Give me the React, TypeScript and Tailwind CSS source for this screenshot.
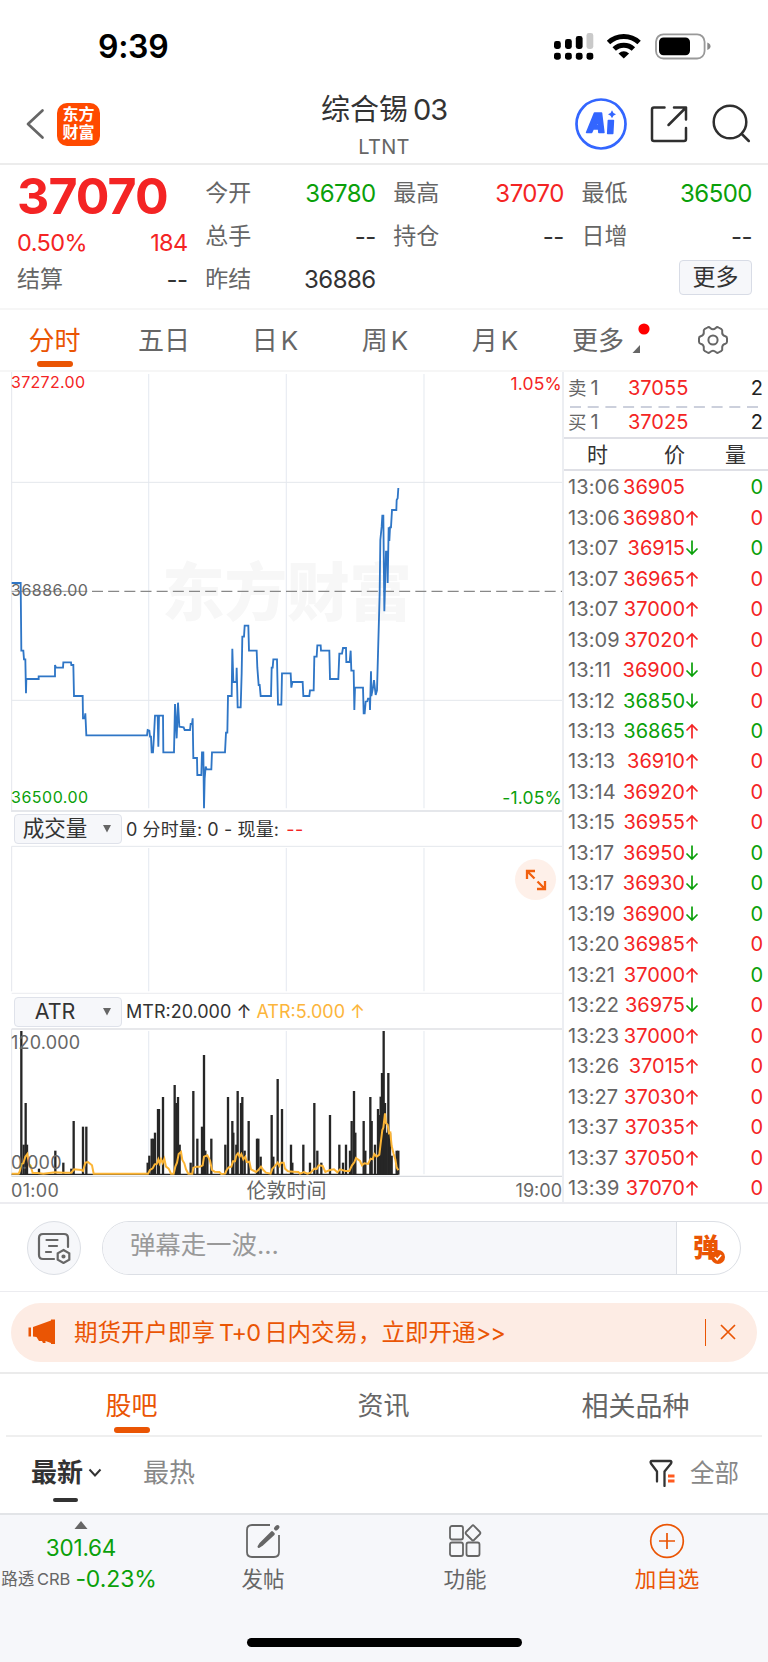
import { clsx } from "clsx";

const RED = "text-[#f42424]";
const GREEN = "text-[#0aa00a]";

type Trade = [time: string, price: string, dir: "up" | "down" | "", priceUp: boolean, volUp: boolean];

const TRADES: Trade[] = [
  ["13:06", "36905", "", true, false],
  ["13:06", "36980", "up", true, true],
  ["13:07", "36915", "down", true, false],
  ["13:07", "36965", "up", true, true],
  ["13:07", "37000", "up", true, true],
  ["13:09", "37020", "up", true, true],
  ["13:11", "36900", "down", true, true],
  ["13:12", "36850", "down", false, true],
  ["13:13", "36865", "up", false, false],
  ["13:13", "36910", "up", true, true],
  ["13:14", "36920", "up", true, true],
  ["13:15", "36955", "up", true, true],
  ["13:17", "36950", "down", true, false],
  ["13:17", "36930", "down", true, false],
  ["13:19", "36900", "down", true, false],
  ["13:20", "36985", "up", true, true],
  ["13:21", "37000", "up", true, false],
  ["13:22", "36975", "down", true, true],
  ["13:23", "37000", "up", true, true],
  ["13:26", "37015", "up", true, true],
  ["13:27", "37030", "up", true, true],
  ["13:37", "37035", "up", true, true],
  ["13:37", "37050", "up", true, true],
  ["13:39", "37070", "up", true, true],
];

// chart coordinates are in thirds of a pixel
const PRICE_LINE =
  "35,69 62,69 64,272 70,272 72,298 76,298 78,400 79,357 116,357 116,349 165,349 165,315 168,323 189,323 190,307 213,307 214,315 220,315 222,408 248,408 249,475 254,475 256,460 259,526 441,526 443,510 448,512 450,530 453,530 455,577 459,577 462,526 465,467 473,467 475,560 477,467 489,467 490,577 522,577 525,432 530,535 534,428 538,500 551,502 554,510 570,510 572,492 576,492 578,475 580,594 591,594 592,645 604,645 606,577 610,577 612,745 614,655 617,620 620,628 634,628 636,577 675,577 678,518 682,518 684,408 695,408 697,266 700,366 709,366 710,323 713,442 722,442 725,340 727,230 732,230 734,197 745,197 747,272 770,272 772,323 776,375 779,375 782,408 813,408 815,323 818,323 820,298 831,298 834,434 844,434 846,340 872,340 874,383 877,366 908,366 910,408 928,408 930,391 941,391 943,290 950,290 952,256 962,256 963,272 988,272 990,357 1015,357 1018,281 1026,281 1029,264 1038,264 1039,306 1049,306 1052,272 1054,332 1061,332 1063,450 1065,383 1089,383 1091,460 1094,460 1097,425 1102,424 1104,416 1109,416 1110,450 1113,334 1114,408 1119,383 1122,360 1127,405 1131,391 1139,100 1141,-60 1145,-100 1147,-133 1150,-133 1153,154 1158,-25 1162,-25 1163,69 1166,-98 1168,-57 1170,-98 1173,-98 1176,-150 1189,-150 1190,-180 1193,-185 1195,-216";

const MTR_BARS: [number, number][] = [
  [64, 93], [71, 434], [77, 309], [81, 434], [117, 506], [166, 452], [190, 488], [214, 506], [221, 363], [249, 380], [259, 380],
  [443, 488], [448, 467], [455, 416], [460, 416], [465, 398], [474, 327], [477, 327], [489, 291], [524, 255], [529, 309], [534, 291], [539, 434],
  [572, 488], [580, 273], [592, 416], [606, 380], [612, 165], [616, 452], [622, 470], [634, 416], [676, 434], [684, 291], [697, 363], [700, 398], [709, 434],
  [713, 273], [723, 309], [727, 291], [734, 452], [746, 363], [771, 416], [775, 416], [782, 470], [815, 345], [820, 470], [833, 237], [846, 327],
  [873, 434], [877, 488], [910, 434], [930, 488], [943, 309], [952, 452], [964, 488], [990, 345], [1018, 434], [1029, 488], [1038, 434],
  [1050, 452], [1055, 363], [1062, 273], [1066, 398], [1091, 363], [1096, 452], [1111, 291], [1115, 363], [1125, 434], [1134, 327], [1138, 345],
  [1142, 290], [1146, 219], [1151, 93], [1155, 309], [1160, 398], [1165, 219], [1170, 398], [1175, 467], [1190, 452], [1195, 452],
];

const ATR_LINE =
  "35,521 56,521 60,512 64,492 70,490 76,470 82,462 87,492 92,497 98,519 112,519 130,521 165,517 190,518 214,518 222,508 244,510 249,513 256,488 264,486 276,496 281,521 444,521 450,510 458,505 464,493 470,492 475,478 479,490 483,478 488,489 493,476 498,500 506,506 513,521 521,521 526,500 531,488 536,462 543,456 547,480 553,490 558,508 565,521 577,521 580,503 590,500 600,500 608,496 612,470 622,466 630,482 636,510 644,515 658,516 664,522 675,521 680,510 686,502 694,500 699,484 705,484 709,466 714,460 719,470 724,462 730,478 736,470 740,486 748,485 753,508 768,516 775,510 783,500 790,510 798,518 812,521 817,506 823,500 833,488 838,498 843,488 851,488 855,506 864,514 880,515 895,516 900,521 912,516 922,521 932,518 943,506 950,507 956,496 968,498 976,516 990,510 1002,508 1012,517 1020,508 1036,513 1048,513 1056,496 1063,487 1068,474 1080,483 1086,496 1093,490 1104,492 1112,476 1118,478 1123,462 1130,470 1138,464 1142,430 1147,390 1150,383 1155,340 1158,370 1163,374 1167,400 1171,398 1175,438 1181,462 1186,478 1190,502 1195,511";

function Grid({ top, bottom }: { top: number; bottom: number }) {
  return (
    <g stroke="#e8ecf2" strokeWidth="3.5">
      {[446, 859, 1272].map((x) => (
        <line key={x} x1={x} x2={x} y1={top} y2={bottom} />
      ))}
    </g>
  );
}

function StatusBar() {
  return (
    <div className="flex h-[90px] items-center justify-between pt-[2px] pr-[56px] pl-[98px]">
      <span className="pt-px text-[32px] leading-none font-semibold tracking-[-0.3px] text-black">9:39</span>
      <svg width="158" height="30" viewBox="553 30 158 30" className="block">
        {[[553, 40], [564, 38], [574.8, 35]].map(([x, y]) => (
          <rect key={x} x={x} y={y} width="6.8" height={48 - y} rx="2.4" />
        ))}
        <rect x="585.5" y="32" width="6.8" height="16" rx="2.4" fill="#c9c9c9" />
        {[553, 564, 574.8, 585.5].map((x) => (
          <rect key={x} x={x} y="51.7" width="6.8" height="7" rx="2.4" />
        ))}
        <g fill="none" stroke="#000" strokeWidth="5">
          <path d="M607.5 41.5a22.5 22.5 0 0 1 30.6 0" />
          <path d="M613.2 48a14 14 0 0 1 19.2 0" />
        </g>
        <path d="M617.5 52.6q5.3-4.6 10.6 0L622.8 57.6z" />
        <rect x="655" y="33.3" width="48.6" height="24.2" rx="7.5" fill="none" stroke="#999" strokeWidth="1.8" />
        <rect x="658" y="36.5" width="31" height="17.8" rx="4.5" />
        <path d="M706.3 41.5q3.2 1.2 3.2 3.8t-3.2 3.8z" fill="#888" />
      </svg>
    </div>
  );
}

function Header() {
  return (
    <div className="grid h-[75px] grid-cols-3 border-b-2 border-[#ececec] pb-0.5">
      <div className="flex items-center gap-3 pb-[7px] pl-[25px]">
        <svg width="20" height="32" viewBox="0 0 20 32" fill="none" stroke="#666" strokeWidth="2.7" strokeLinecap="round" strokeLinejoin="round">
          <path d="M17.5 2.5 3 16l14.5 13.5" />
        </svg>
        <div className="flex h-[43px] w-[43px] items-center justify-center rounded-[10px] bg-[#ff4a00] pb-0.5 text-center text-[16px] leading-[18px] font-semibold text-white">
          东方
          <br />
          财富
        </div>
      </div>
      <div className="flex flex-col items-center pt-px">
        <div className="flex h-[37px] items-center gap-[5px] text-[29px] leading-none text-[#333]">
          <span>综合锡</span>
          <span className="tracking-[-1.2px]">03</span>
        </div>
        <div className="flex h-[37px] items-center text-[20px] leading-none tracking-[0.3px] text-[#666]">LTNT</div>
      </div>
      <div className="flex items-start justify-end pt-[8px] pr-[17px]">
        <svg width="178" height="52" viewBox="573 98 178 52" fill="none">
          <circle cx="601" cy="124" r="24.5" stroke="#3366ff" strokeWidth="2.7" />
          <g fill="#3366ff" stroke="#3366ff" strokeWidth="1.6" strokeLinejoin="round">
            <path fillRule="evenodd" d="M594.5 113h7l2.4 19.5h-5l-.3-3.6h-5.4l-1.6 3.6h-5zm1.2 12.2h2.7l-.4-5.6z" />
            <path d="M608.4 120.5h5l-.7 13h-5z" />
          </g>
          <path d="M612 110.2q.8 3.2 4 4-3.2.8-4 4-.8-3.2-4-4 3.2-.8 4-4z" fill="#3366ff" />
          <g stroke="#2f2f2f" strokeWidth="2.5" strokeLinecap="round" strokeLinejoin="round">
            <path d="M664.5 107.5H654q-2 0-2 2V139q0 2 2 2h30q2 0 2-2v-11" />
            <path d="M674 107.5h12v12M686 107.5 668.5 125" />
            <circle cx="730" cy="122" r="16.3" />
            <path d="M741.8 134l7 7" />
          </g>
        </svg>
      </div>
    </div>
  );
}

function Stat({ label, value, color = "text-[#333]" }: { label: string; value: string; color?: string }) {
  return (
    <div className="flex h-[43px] items-center justify-between">
      <span className="text-[23px] text-[#666]">{label}</span>
      <span className={clsx("text-[24px] tracking-[-0.5px]", color)}>{value}</span>
    </div>
  );
}

function Quote() {
  return (
    <div className="flex h-[145px] gap-[17.5px] border-b-2 border-[#f6f6f6] pr-4 pl-[17px] leading-none">
      <div className="w-[171px]">
        <div className={clsx("flex h-[61px] items-center text-[50px] font-bold tracking-[-0.9px] whitespace-nowrap", RED)}>37070</div>
        <div className={clsx("flex h-[35px] items-center justify-between pb-0.5 text-[23.5px] tracking-[-0.6px]", RED)}>
          <span>0.50%</span>
          <span>184</span>
        </div>
        <div className="-mt-[3px]">
          <Stat label="结算" value="--" />
        </div>
      </div>
      <div className="w-[171px] pt-[7px]">
        <Stat label="今开" value="36780" color={GREEN} />
        <Stat label="总手" value="--" />
        <Stat label="昨结" value="36886" />
      </div>
      <div className="w-[171px] pt-[7px]">
        <Stat label="最高" value="37070" color={RED} />
        <Stat label="持仓" value="--" />
      </div>
      <div className="w-[171px] pt-[7px]">
        <Stat label="最低" value="36500" color={GREEN} />
        <Stat label="日增" value="--" />
        <div className="flex h-[43px] items-start justify-end pt-[2px]">
          <button className="flex h-[35px] w-[73px] items-center justify-center rounded border border-[#d8dce6] bg-[#f6f7fa] text-[23px] text-[#333]">更多</button>
        </div>
      </div>
    </div>
  );
}

function KTab({ unit }: { unit: string }) {
  return (
    <div className="flex w-[110px] justify-center gap-[3px] pt-[18px] pl-[2px]">
      <span>{unit}</span>
      <span>K</span>
    </div>
  );
}

function PeriodTabs() {
  return (
    <div className="flex h-[62px] border-b-2 border-[#f6f6f6] text-[26px] leading-none text-[#666]">
      <div className="flex w-[109px] flex-col items-center pt-[18px] text-[#ea5504]">
        分时
        <span className="mt-[7px] h-[6px] w-9 rounded-full bg-[#ea5504]" />
      </div>
      <div className="w-[110px] pt-[18px] text-center">五日</div>
      <KTab unit="日" />
      <KTab unit="周" />
      <KTab unit="月" />
      <div className="flex w-[117px] pt-[18px] pl-[23px]">
        更多
        <svg width="20" height="34" viewBox="0 0 20 34" className="-mt-[6px] ml-[7px]">
          <circle cx="13" cy="7" r="5.6" fill="#ff0000" />
          <path d="M9 23v8H1.5z" fill="#666" />
        </svg>
      </div>
      <div className="flex w-[94px] justify-center pt-[15px]">
        <svg width="30" height="30" viewBox="-15 -15 30 30" fill="none" stroke="#666" strokeWidth="2" strokeLinejoin="round">
          <path d="M-5.5-12.5Q-4-13.5-2.8-12 0-9.5 2.8-12 4-13.5 5.5-12.5L8.5-10.8Q9.6-10 9.2-8.5 8.8-4.6 12.4-3.8 14-3.3 14-1.8V1.8Q14 3.3 12.4 3.8 8.8 4.6 9.2 8.5 9.6 10 8.5 10.8L5.5 12.5Q4 13.5 2.8 12 0 9.5-2.8 12-4 13.5-5.5 12.5L-8.5 10.8Q-9.6 10-9.2 8.5-8.8 4.6-12.4 3.8-14 3.3-14 1.8V-1.8Q-14-3.3-12.4-3.8-8.8-4.6-9.2-8.5-9.6-10-8.5-10.8z" />
          <circle r="4.6" />
        </svg>
      </div>
    </div>
  );
}

function IndicatorSelect({ name }: { name: string }) {
  return (
    <div className="ml-[14px] flex h-[30px] w-[108px] items-center rounded border border-[#dfe2ea] bg-[#f6f7fa] text-[21.5px] text-[#333]">
      <span className="w-[80px] text-center">{name}</span>
      <svg width="10" height="8" viewBox="0 0 10 8" className="ml-[7px]">
        <path d="M1 0h8L5 7.5z" fill="#666" />
      </svg>
    </div>
  );
}

function Charts() {
  return (
    <div className="w-[562px] leading-none">
      <div className="relative h-[440px]">
        <svg width="562" height="440" viewBox="0 -564 1686 1320" className="block">
          <Grid top={-558} bottom={745} />
          <path d="M35-564V756M35-233H1686M35 421H1686" stroke="#e4e7ec" strokeWidth="3" fill="none" />
          <path d="M35 753H1686" stroke="#dcdfe4" strokeWidth="4" />
          <text x="486" y="166" fontSize="188" fontWeight="900" fill="#f7f7f7" fontFamily="Noto Sans CJK SC" textLength="750">东方财富</text>
          <path d="M35 94H262" stroke="#999" strokeWidth="3" />
          <path d="M276 94H1686" stroke="#888" strokeWidth="3.5" strokeDasharray="33 15.5" />
          <polyline points={PRICE_LINE} fill="none" stroke="#2f76c6" strokeWidth="5.5" />
        </svg>
        <span className={clsx("absolute top-[2px] left-[11px] text-[16px] tracking-[0.3px]", RED)}>37272.00</span>
        <span className={clsx("absolute top-[3px] right-0 text-[17.5px] tracking-[0.2px]", RED)}>1.05%</span>
        <span className="absolute top-[210px] left-[11px] text-[16px] tracking-[0.5px] text-[#666]">36886.00</span>
        <span className={clsx("absolute top-[417px] left-[11px] text-[16px] tracking-[0.5px]", GREEN)}>36500.00</span>
        <span className={clsx("absolute top-[417px] right-0 text-[17.5px] tracking-[0.2px]", GREEN)}>-1.05%</span>
      </div>
      <div className="flex h-[33px] items-center gap-1 pt-px">
        <IndicatorSelect name="成交量" />
        <span className="pt-px text-[18px] tracking-[0.1px] whitespace-pre text-[#333]">
          0 分时量: 0 - 现量: <span className="ml-[2px] tracking-[0.5px] text-[#f42424]">--</span>
        </span>
      </div>
      <div className="relative h-[149px]">
        <svg width="562" height="149" viewBox="0 135 1686 447" className="block">
          <Grid top={144} bottom={574} />
          <path d="M35 139H1686M35 139V574" stroke="#e4e7ec" strokeWidth="3" fill="none" />
          <path d="M35 581H1686" stroke="#eeeff2" strokeWidth="5" />
        </svg>
        <div className="absolute top-[14px] right-[6px] flex h-[41px] w-[41px] items-center justify-center rounded-full bg-[#fef0e9]">
          <svg width="22" height="22" viewBox="0 0 22 22" fill="none" stroke="#f2600f" strokeWidth="2.3">
            <path d="M10 2H2v8M2 2l7.5 7.5M20 12v8h-8M20 20l-7.5-7.5" />
          </svg>
        </div>
      </div>
      <div className="flex h-[34px] items-center gap-1 pt-px">
        <IndicatorSelect name="ATR" />
        <span className="text-[18px] whitespace-pre text-[#333]">
          MTR:20.000 ↑ <span className="text-[#fcb53b]">ATR:5.000 ↑</span>
        </span>
      </div>
      <div className="relative h-[149px]">
        <svg width="562" height="149" viewBox="0 84 1686 447" className="block">
          <Grid top={93} bottom={523} />
          <path d="M35 87V530" stroke="#e4e7ec" strokeWidth="3" />
          <path d="M35 87H1686" stroke="#dfe0e5" strokeWidth="5" />
          <path d="M35 529H1686" stroke="#d8dbe0" strokeWidth="4" />
          <path d="M35 523H1195" stroke="#262626" strokeWidth="4" />
          <g stroke="#262626" strokeWidth="7">
            {MTR_BARS.map(([x, y], i) => (
              <line key={i} x1={x} x2={x} y1={y} y2="524" />
            ))}
          </g>
          <polyline points={ATR_LINE} fill="none" stroke="#fcb536" strokeWidth="6" />
        </svg>
        <span className="absolute top-[6px] left-[11px] text-[18px] tracking-[0.2px] text-[#666]">120.000</span>
        <span className="absolute top-[126px] left-[11px] text-[18px] tracking-[0.2px] text-[#666]">0.000</span>
      </div>
      <div className="grid h-[27px] grid-cols-3 items-center pl-[11px] text-[18px] text-[#666]">
        <span className="tracking-[0.3px]">01:00</span>
        <span className="text-center text-[20px]">伦敦时间</span>
        <span className="text-right">19:00</span>
      </div>
    </div>
  );
}

function Arrow({ up }: { up: boolean }) {
  return (
    <svg width="14" height="16" viewBox="0 0 14 16" fill="none" stroke={up ? "#f42424" : "#0aa00a"} strokeWidth="1.7">
      {up ? <path d="M7 15.5V2M1.5 7.5 7 2l5.5 5.5" /> : <path d="M7 .5V14M1.5 8.5 7 14l5.5-5.5" />}
    </svg>
  );
}

function Offer({ side, price }: { side: string; price: string }) {
  return (
    <div className="flex items-center pr-[5px] pl-[4px]">
      <span className="flex w-[60px] items-center gap-[4px] text-[#666]">
        <span className="text-[18.5px]">{side}</span>
        <span>1</span>
      </span>
      <span className={clsx("flex-1", RED)}>{price}</span>
      <span className="text-[#222]">2</span>
    </div>
  );
}

function OrderBook() {
  return (
    <div className="w-[206px] border-l-2 border-[#eceef2] text-[20px] leading-none">
      <div className="pt-[6px]">
        <Offer side="卖" price="37055" />
      </div>
      <svg width="204" height="2" viewBox="0 0 204 2" className="mt-[8px] block">
        <path d="M6 1H195" stroke="#ccd0dc" strokeWidth="2" strokeDasharray="11 6.7" />
      </svg>
      <div className="h-[29px] pt-[4px]">
        <Offer side="买" price="37025" />
      </div>
      <div className="flex h-[34px] items-center border-y-2 border-[#dfe0e6] text-[21px] text-[#333]">
        <span className="ml-[23px] w-[77px]">时</span>
        <span className="w-[61px]">价</span>
        <span>量</span>
      </div>
      <div className="pt-[1px]">
        {TRADES.map(([time, price, dir, priceUp, volUp], i) => (
          <div key={i} className="flex h-[30.48px] items-center pr-[5px] pl-[4px]">
            <span className="w-[52px] tracking-[0.1px] text-[#666]">{time}</span>
            <span className={clsx("w-[65px] text-right", priceUp ? RED : GREEN)}>{price}</span>
            {dir && <Arrow up={dir === "up"} />}
            <span className={clsx("ml-auto", volUp ? RED : GREEN)}>0</span>
          </div>
        ))}
      </div>
    </div>
  );
}

function Danmu() {
  return (
    <div className="flex h-[90px] items-center gap-[21px] border-t-2 border-b border-[#ececf0] pr-[27px] pl-[27px]">
      <div className="flex h-[54px] w-[54px] items-center justify-center rounded-full border border-[#dcdfe5] bg-[#f6f7fa]">
        <svg width="36" height="32" viewBox="0 0 36 32" fill="none" stroke="#666" strokeWidth="2.2" strokeLinecap="round">
          <path d="M18 27H7q-4 0-4-4V6q0-4 4-4h21q4 0 4 4v9" />
          <path d="M10.5 8h11M13 14h8M10 20h5" />
          <path d="M27.5 18l5.8 3.3v6.4l-5.8 3.3-5.8-3.3v-6.4z" />
          <circle cx="27.5" cy="24.5" r="1" />
        </svg>
      </div>
      <div className="flex h-[54px] w-[640px] overflow-hidden rounded-full border border-[#dcdfe5]">
        <div className="flex flex-1 items-center border-r border-[#dcdfe5] bg-[#f6f7fa] pb-1 pl-[27px] text-[25.5px] tracking-[-0.1px] text-[#999]">弹幕走一波...</div>
        <div className="relative flex w-[63px] items-center pl-[16px] text-[26px] font-black text-[#ea5504]">
          弹
          <svg width="14" height="14" viewBox="0 0 14 14" className="absolute right-[15px] bottom-[10px]">
            <circle cx="7" cy="7" r="7" fill="#ea5504" />
            <path d="M3.8 7l2.4 2.5 4-4.5" fill="none" stroke="#fff" strokeWidth="1.7" />
          </svg>
        </div>
      </div>
    </div>
  );
}

function PromoBanner() {
  return (
    <div className="flex h-[82px] items-center border-b-2 border-[#ebebeb] px-[11px]">
      <div className="flex h-[59px] flex-1 items-center rounded-full bg-[#fdece4] pl-[17px] text-[#ea5504]">
        <svg width="28" height="26" viewBox="0 0 28 26" fill="#ea5504">
          <path d="M.5 8.5h2.5v9H.5zM5 8l18-6.5V.5h4v24.5h-4v-1L17.500 22v2h-2.5l-1-2h-3l-2.5-4L5 17.5z" />
        </svg>
        <span className="ml-[18px] flex-1 pt-0.5 text-[23.5px] leading-none">
          期货开户即享<span className="mx-[4px] tracking-[-0.9px]">T+0</span>日内交易，立即开通<span className="tracking-[-0.8px]">&gt;&gt;</span>
        </span>
        <span className="h-[27px] w-[1.5px] bg-[#ea5504]" />
        <svg width="16" height="16" viewBox="0 0 16 16" className="mr-[21px] ml-[14px]" stroke="#ea5504" strokeWidth="1.7">
          <path d="M1 1l14 14M15 1 1 15" />
        </svg>
      </div>
    </div>
  );
}

function Forum() {
  return (
    <div className="leading-none">
      <div className="mx-[6px] flex h-[63px] border-b-2 border-[#efefef] text-[26px] text-[#666]">
        <div className="flex w-[251px] flex-col items-center pt-[19px] text-[#ea5504]">
          股吧
          <span className="mt-[8px] h-[6px] w-9 rounded-full bg-[#ea5504]" />
        </div>
        <div className="w-[253px] pt-[19px] text-center">资讯</div>
        <div className="w-[251px] pt-[19px] text-center text-[27px]">相关品种</div>
      </div>
      <div className="flex h-[76px] pt-[23px] pr-[29px] pl-[31px] text-[26px] text-[#888]">
        <div className="flex w-[112px] flex-col">
          <div className="flex items-center gap-[5px] font-bold text-[#333]">
            最新
            <svg width="14" height="10" viewBox="0 0 14 10" fill="none" stroke="#333" strokeWidth="2">
              <path d="M1.5 1.5 7 7.5l5.5-6" />
            </svg>
          </div>
          <span className="mt-[12px] ml-[22px] h-[4px] w-[25px] rounded-full bg-[#333]" />
        </div>
        <span className="flex-1">最热</span>
        <svg width="27" height="28" viewBox="0 0 27 28" fill="none" strokeWidth="2.3" strokeLinejoin="round" className="-mt-px">
          <path d="M8 22.5V12.5L2 4.5Q.8 2 3 2h18q2.2 0 1 2.5L15.5 12.5V27" stroke="#333" strokeLinecap="round" />
          <path d="M19 17h6.5M19 22h6.5" stroke="#ff5a1f" strokeWidth="3" />
        </svg>
        <span className="ml-[14px] text-[24.5px] leading-[26px]">全部</span>
      </div>
    </div>
  );
}

function BottomBar() {
  return (
    <div className="flex h-[149px] flex-col items-center border-t-2 border-[#e2e4e7] bg-[#f6f7fa] text-[21.5px] leading-none text-[#666]">
      <div className="flex h-[123px] w-full">
        <div className="flex w-[162px] flex-col items-center pt-[6px]">
          <svg width="14" height="8" viewBox="0 0 14 8">
            <path d="M7 0l6.5 8H.5z" fill="#666" />
          </svg>
          <span className="mt-[8px] text-[22.5px] tracking-[-0.2px] text-[#0aa00a]">301.64</span>
          <div className="mt-[8.5px] flex items-center gap-[5px] pr-[4px] whitespace-nowrap">
            <span className="text-[16.5px]">路透 <span className="-ml-[2px]">CRB</span></span>
            <span className="text-[23px] tracking-[-0.1px] text-[#0aa00a]">-0.23%</span>
          </div>
        </div>
        <div className="flex w-[202px] flex-col items-center gap-[10px] pt-[8px]">
          <svg width="36" height="36" viewBox="0 0 36 36" fill="none" stroke="#666" strokeWidth="1.8">
            <path d="M25 2H7Q2 2 2 7v22q0 5 5 5h22q5 0 5-5V12" />
            <path d="M27 9.5 15.5 21l-1.7 2.7 2.7-1.7L28.5 11z" strokeWidth="2.6" fill="#666" strokeLinejoin="round" />
            <path d="M31 5.5 32.5 4" strokeWidth="4" strokeLinecap="round" />
          </svg>
          发帖
        </div>
        <div className="flex w-[202px] flex-col items-center gap-[10px] pt-[8px]">
          <svg width="36" height="36" viewBox="0 0 36 36" fill="none" stroke="#666" strokeWidth="1.8" strokeLinejoin="round">
            <rect x="3" y="3" width="13" height="13.5" rx="2" />
            <rect x="3" y="19.5" width="13" height="13.5" rx="2" />
            <rect x="19.5" y="19.5" width="13" height="13.5" rx="2" />
            <path d="M25 2.8q1-1 2 0l6 6.2q.8 1 0 2l-6 6q-1 1-2 0l-6-6q-.8-1 0-2z" />
          </svg>
          功能
        </div>
        <div className="flex w-[202px] flex-col items-center gap-[10px] pt-[8px] text-[#ea5504]">
          <svg width="36" height="36" viewBox="0 0 36 36" fill="none" stroke="#ea5504" strokeWidth="1.7">
            <circle cx="18" cy="18" r="16.3" />
            <path d="M18 10v16M10 18h16" />
          </svg>
          加自选
        </div>
      </div>
      <span className="h-[9px] w-[275px] rounded-full bg-black" />
    </div>
  );
}

export default function App() {
  return (
    <div className="h-[1662px] w-[768px] overflow-hidden bg-white font-['Inter','Noto_Sans_CJK_SC',sans-serif]">
      <StatusBar />
      <Header />
      <Quote />
      <PeriodTabs />
      <div className="flex h-[830px]">
        <Charts />
        <OrderBook />
      </div>
      <Danmu />
      <PromoBanner />
      <Forum />
      <BottomBar />
    </div>
  );
}
